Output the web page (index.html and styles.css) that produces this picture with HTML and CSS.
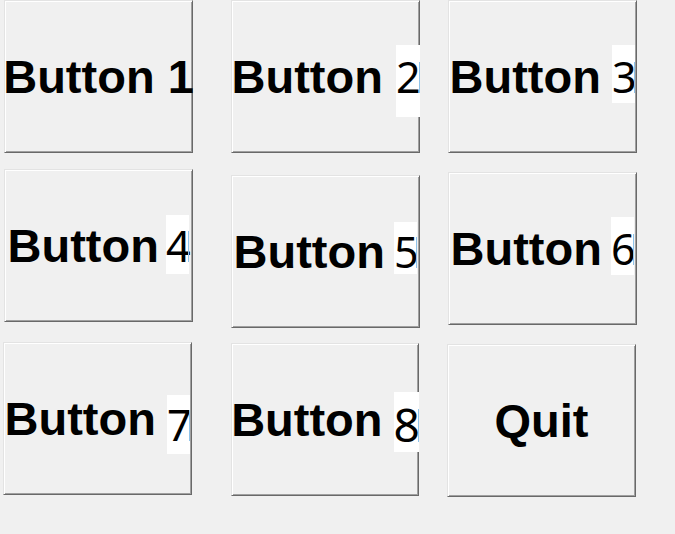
FILE: index.html
```html
<!DOCTYPE html>
<html>
<head>
<meta charset="utf-8">
<link rel="stylesheet" href="styles.css">
</head>
<body>
<div class="grid">
  <div class="btn"><span class="cap">Button 1</span></div>
  <div class="btn"><span class="cap">Button<span class="num n2">2</span></span></div>
  <div class="btn"><span class="cap">Button<span class="num n3">3</span></span></div>
  <div class="btn"><span class="cap">Button<span class="num n4">4</span></span></div>
  <div class="btn b5"><span class="cap">Button<span class="num n5">5</span></span></div>
  <div class="btn b6"><span class="cap">Button<span class="num n6">6</span></span></div>
  <div class="btn b7"><span class="cap">Button<span class="num n7">7</span></span></div>
  <div class="btn b8"><span class="cap">Button<span class="num n8">8</span></span></div>
  <div class="btn bq"><span class="cap">Quit</span></div>
</div>
</body>
</html>
```

FILE: styles.css
```css
html, body {
  margin: 0;
  padding: 0;
  background: #f0f0f0;
}

.grid {
  display: grid;
  grid-template-columns: 227px 217px 189px;
  grid-template-rows: 169px 173px auto;
  padding-left: 4px;
  align-items: start;
}

.btn {
  box-sizing: border-box;
  width: 189px;
  height: 153px;
  background: #f0f0f0;
  border: 1px solid;
  border-color: #e3e3e3 #696969 #696969 #e3e3e3;
  box-shadow: inset 1px 1px #ffffff, inset -1px -1px #a0a0a0;
  display: flex;
  align-items: center;
  justify-content: center;
}

.b5 { margin-top: 6px; }
.b6 { margin-top: 3px; }
.b7 { margin-left: -1px; }
.b8 { margin-top: 1px; width: 188px; }
.bq { margin-top: 2px; margin-left: -1px; }

.cap {
  font-family: "Liberation Sans", Arial, sans-serif;
  font-weight: bold;
  font-size: 47px;
  line-height: 1;
  color: #000;
  white-space: nowrap;
}

.num {
  font-family: "Noto Sans", "Open Sans", sans-serif;
  font-weight: normal;
  font-size: 43px;
  line-height: 0;
  padding: 3px 0 16px;
  margin-left: 13px;
  background: linear-gradient(#ffffff, #ffffff) top left / 100% 72px no-repeat;
}

.num::after {
  content: "";
  display: inline-block;
  width: 0;
  height: 31px;
  margin-left: -2px;
  border-left: 1px solid #8fc3ea;
  vertical-align: baseline;
}

.n2 { margin-left: 13px; padding-top: 2px; background-size: 100% 72px; }
.n3 { margin-left: 11px; padding-top: 2px; background-size: 100% 58px; }
.n4 { margin-left: 7px; padding-top: 1px; background-size: 100% 59px; }
.n5 { margin-left: 9px; padding-top: 0; background-size: 100% 52px; }
.n6 { margin-left: 9px; padding-top: 2px; background-size: 100% 58px; }
.n7 { margin-left: 11px; padding-top: 0; background-size: 100% 59px; vertical-align: -6px; }
.n8 { margin-left: 11px; padding-top: 1px; font-size: 46px; background-size: 100% 60px; vertical-align: -6px; }
.n8::after { height: 33px; }
```
